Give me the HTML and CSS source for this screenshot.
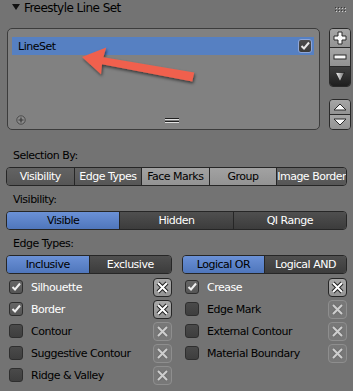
FILE: index.html
```html
<!DOCTYPE html>
<html lang="en">
<head>
  <meta charset="utf-8" />
  <title>Freestyle Line Set</title>
  <link rel="stylesheet" href="styles.css">
</head>
<body>
  <div class="panel-head">
    <span class="tri"></span>
    <span class="title">Freestyle Line Set</span>
    <svg class="grip" width="11" height="5" viewBox="0 0 11 5">
      <g fill="#d0d0d0"><rect x="1" y="1" width="1" height="1"/><rect x="4" y="1" width="1" height="1"/><rect x="7" y="1" width="1" height="1"/><rect x="10" y="1" width="1" height="1"/><rect x="1" y="4" width="1" height="1"/><rect x="4" y="4" width="1" height="1"/><rect x="7" y="4" width="1" height="1"/><rect x="10" y="4" width="1" height="1"/></g>
      <g fill="#3a3a3a"><rect x="0" y="0" width="1" height="1"/><rect x="3" y="0" width="1" height="1"/><rect x="6" y="0" width="1" height="1"/><rect x="9" y="0" width="1" height="1"/><rect x="0" y="3" width="1" height="1"/><rect x="3" y="3" width="1" height="1"/><rect x="6" y="3" width="1" height="1"/><rect x="9" y="3" width="1" height="1"/></g>
    </svg>
  </div>

  <div class="list-area">
    <div class="list">
      <div class="list-item">
        <span>LineSet</span>
        <span class="cb cb-item">
          <svg width="12" height="12" viewBox="0 0 12 12"><polyline points="2.5,6 5,8.5 10,2.5" fill="none" stroke="#e8e8e8" stroke-width="2"/></svg>
        </span>
      </div>
      <div class="list-foot">
        <svg width="10" height="10" viewBox="0 0 10 10">
          <circle cx="5" cy="5" r="4.2" fill="#8a8a8a" stroke="#4a4a4a" stroke-width="1"/>
          <path d="M5 2.5v5M2.5 5h5" stroke="#3a3a3a" stroke-width="1.2"/>
        </svg>
        <svg class="resize" width="14" height="5" viewBox="0 0 14 5">
          <rect x="0" y="0" width="14" height="1" fill="#202020"/>
          <rect x="0" y="1" width="14" height="1" fill="#e0e0e0"/>
          <rect x="0" y="3" width="14" height="1" fill="#202020"/>
          <rect x="0" y="4" width="14" height="1" fill="#e0e0e0"/>
        </svg>
      </div>
    </div>

    <div class="side">
      <div class="sgroup">
        <div class="sbtn">
          <svg width="14" height="14" viewBox="0 0 14 14"><path d="M5 1h4v4h4v4h-4v4h-4v-4h-4v-4h4z" fill="#fafafa" stroke="#2a2a2a" stroke-width="1"/></svg>
        </div>
        <div class="sbtn">
          <svg width="14" height="6" viewBox="0 0 14 6"><rect x="1" y="1" width="12" height="4" fill="#fafafa" stroke="#2a2a2a" stroke-width="1"/></svg>
        </div>
        <div class="sbtn sbtn-dark">
          <svg width="10" height="10" viewBox="0 0 10 10">
            <defs><linearGradient id="dd" x1="0" y1="0" x2="1" y2="0"><stop offset="0" stop-color="#ffffff"/><stop offset="1" stop-color="#6a6a6a"/></linearGradient></defs>
            <path d="M0.5 0.5h9l-4.5 9z" fill="url(#dd)" stroke="#111" stroke-width="0.6"/>
          </svg>
        </div>
      </div>
      <div class="sgroup">
        <div class="sbtn sbtn-small">
          <svg width="14" height="8" viewBox="0 0 14 8"><path d="M1 7h12l-6-6z" fill="#fafafa" stroke="#2a2a2a" stroke-width="1"/></svg>
        </div>
        <div class="sbtn sbtn-small">
          <svg width="14" height="8" viewBox="0 0 14 8"><path d="M1 1h12l-6 6z" fill="#fafafa" stroke="#2a2a2a" stroke-width="1"/></svg>
        </div>
      </div>
    </div>
  </div>

  <div class="label first">Selection By:</div>
  <div class="seg">
    <span class="t-on">Visibility</span>
    <span class="t-on">Edge Types</span>
    <span class="t-off">Face Marks</span>
    <span class="t-off">Group</span>
    <span class="t-on">Image Border</span>
  </div>

  <div class="label">Visibility:</div>
  <div class="seg">
    <span class="r-on">Visible</span>
    <span class="r-off">Hidden</span>
    <span class="r-off">QI Range</span>
  </div>

  <div class="label">Edge Types:</div>
  <div class="seg-pair">
    <div class="seg seg-left">
      <span class="r-on">Inclusive</span>
      <span class="r-off">Exclusive</span>
    </div>
    <div class="seg seg-right">
      <span class="r-on">Logical OR</span>
      <span class="r-off">Logical AND</span>
    </div>
  </div>

  <div class="checks">
    <div class="col col-left">
      <div class="check-row on">
        <span class="cb"><svg width="12" height="12" viewBox="0 0 12 12"><polyline points="2.5,6 5,8.5 10,2.5" fill="none" stroke="#f0f0f0" stroke-width="2"/></svg></span>
        <span class="name">Silhouette</span>
        <span class="xbtn"><svg width="17" height="17" viewBox="0 0 17 17"><path d="M4 4l9 9M13 4l-9 9" stroke="#222" stroke-width="4"/><path d="M4 4l9 9M13 4l-9 9" stroke="#fff" stroke-width="2"/></svg></span>
      </div>
      <div class="check-row on">
        <span class="cb"><svg width="12" height="12" viewBox="0 0 12 12"><polyline points="2.5,6 5,8.5 10,2.5" fill="none" stroke="#f0f0f0" stroke-width="2"/></svg></span>
        <span class="name">Border</span>
        <span class="xbtn"><svg width="17" height="17" viewBox="0 0 17 17"><path d="M4 4l9 9M13 4l-9 9" stroke="#222" stroke-width="4"/><path d="M4 4l9 9M13 4l-9 9" stroke="#fff" stroke-width="2"/></svg></span>
      </div>
      <div class="check-row">
        <span class="cb"></span>
        <span class="name">Contour</span>
        <span class="xbtn off"><svg width="17" height="17" viewBox="0 0 17 17"><path d="M4 4l9 9M13 4l-9 9" stroke="#6e6e6e" stroke-width="4"/><path d="M4 4l9 9M13 4l-9 9" stroke="#e4e4e4" stroke-width="2"/></svg></span>
      </div>
      <div class="check-row">
        <span class="cb"></span>
        <span class="name">Suggestive Contour</span>
        <span class="xbtn off"><svg width="17" height="17" viewBox="0 0 17 17"><path d="M4 4l9 9M13 4l-9 9" stroke="#6e6e6e" stroke-width="4"/><path d="M4 4l9 9M13 4l-9 9" stroke="#e4e4e4" stroke-width="2"/></svg></span>
      </div>
      <div class="check-row">
        <span class="cb"></span>
        <span class="name">Ridge &amp; Valley</span>
        <span class="xbtn off"><svg width="17" height="17" viewBox="0 0 17 17"><path d="M4 4l9 9M13 4l-9 9" stroke="#6e6e6e" stroke-width="4"/><path d="M4 4l9 9M13 4l-9 9" stroke="#e4e4e4" stroke-width="2"/></svg></span>
      </div>
    </div>
    <div class="col col-right">
      <div class="check-row on">
        <span class="cb"><svg width="12" height="12" viewBox="0 0 12 12"><polyline points="2.5,6 5,8.5 10,2.5" fill="none" stroke="#f0f0f0" stroke-width="2"/></svg></span>
        <span class="name">Crease</span>
        <span class="xbtn"><svg width="17" height="17" viewBox="0 0 17 17"><path d="M4 4l9 9M13 4l-9 9" stroke="#222" stroke-width="4"/><path d="M4 4l9 9M13 4l-9 9" stroke="#fff" stroke-width="2"/></svg></span>
      </div>
      <div class="check-row">
        <span class="cb"></span>
        <span class="name">Edge Mark</span>
        <span class="xbtn off"><svg width="17" height="17" viewBox="0 0 17 17"><path d="M4 4l9 9M13 4l-9 9" stroke="#6e6e6e" stroke-width="4"/><path d="M4 4l9 9M13 4l-9 9" stroke="#e4e4e4" stroke-width="2"/></svg></span>
      </div>
      <div class="check-row">
        <span class="cb"></span>
        <span class="name">External Contour</span>
        <span class="xbtn off"><svg width="17" height="17" viewBox="0 0 17 17"><path d="M4 4l9 9M13 4l-9 9" stroke="#6e6e6e" stroke-width="4"/><path d="M4 4l9 9M13 4l-9 9" stroke="#e4e4e4" stroke-width="2"/></svg></span>
      </div>
      <div class="check-row">
        <span class="cb"></span>
        <span class="name">Material Boundary</span>
        <span class="xbtn off"><svg width="17" height="17" viewBox="0 0 17 17"><path d="M4 4l9 9M13 4l-9 9" stroke="#6e6e6e" stroke-width="4"/><path d="M4 4l9 9M13 4l-9 9" stroke="#e4e4e4" stroke-width="2"/></svg></span>
      </div>
    </div>
  </div>

  <!-- annotation arrow drawn over the list -->
  <svg class="arrow" width="353" height="391" viewBox="0 0 353 391">
    <defs>
      <filter id="shadow" x="-20%" y="-50%" width="140%" height="200%">
        <feDropShadow dx="1" dy="2" stdDeviation="1.5" flood-color="#000" flood-opacity="0.55"/>
      </filter>
    </defs>
    <polygon points="82,57 106.2,47.6 103.4,57.3 194.2,72.6 192.3,81.4 102,64.2 101,74.2" fill="#f0614d" filter="url(#shadow)"/>
  </svg>
</body>
</html>
```

FILE: styles.css
```css
html, body { margin: 0; padding: 0; }
body { width: 353px; height: 391px; overflow: hidden; position: relative; background: #737373; font-family: "DejaVu Sans", Verdana, sans-serif; font-size: 11px; letter-spacing: -0.5px; color: #000; }

.panel-head { height: 28px; display: flex; align-items: flex-start; padding-left: 12px; box-sizing: border-box; }
.panel-head .tri { width: 0; height: 0; border-left: 4px solid transparent; border-right: 4px solid transparent; border-top: 6px solid #111; margin-top: 4px; }
.panel-head .title { margin-left: 4px; font-size: 12px; line-height: 17px; letter-spacing: -0.55px; }
.panel-head .grip { margin-left: auto; margin-right: 7px; margin-top: 7px; }

.list-area { display: flex; padding-left: 7px; height: 102px; }
.list { width: 313px; height: 102px; box-sizing: border-box; border: 1px solid #3c3c3c; border-radius: 5px; background: #818181; padding: 8px 5px 4px 4px; display: flex; flex-direction: column; }
.list-item { height: 18px; background: #5680c2; display: flex; align-items: center; justify-content: space-between; padding: 0 2px 0 6px; }
.list-foot { margin-top: auto; height: 10px; display: flex; align-items: center; padding-left: 4px; }
.list-foot .resize { margin-left: 139px; }

.side { margin-left: 9px; width: 22px; display: flex; flex-direction: column; gap: 12px; }
.sgroup { border: 1px solid #2a2a2a; border-radius: 4px; overflow: hidden; display: flex; flex-direction: column; }
.sbtn { height: 18px; display: flex; align-items: center; justify-content: center; background: linear-gradient(#a6a6a6, #939393); }
.sbtn + .sbtn { border-top: 1px solid #2a2a2a; }
.sbtn-dark { height: 19px; background: linear-gradient(#404040, #1e1e1e); }
.sbtn-small { height: 14px; }

.label { height: 25px; padding: 5px 0 0 13px; box-sizing: border-box; line-height: 18px; }
.label.first { margin-top: 12px; }

.seg { display: flex; height: 19px; margin: 0 6px; box-sizing: border-box; border: 1px solid #262626; border-radius: 4px; overflow: hidden; }
.seg > span { flex: 1; display: flex; align-items: center; justify-content: center; white-space: nowrap; border-left: 1px solid #262626; }
.seg > span:first-child { border-left: none; }
.t-on { background: linear-gradient(#636363, #565656); color: #fff; }
.t-off { background: linear-gradient(#a2a2a2, #939393); color: #000; }
.r-on { background: linear-gradient(#6b91d6, #4f76bc); color: #000; }
.r-off { background: linear-gradient(#4f4f4f, #3c3c3c); color: #fff; }

.seg-pair { display: flex; gap: 10px; margin: 0 6px; }
.seg-pair .seg { margin: 0; }
.seg-left { width: 166px; }
.seg-right { flex: 1; }

.checks { display: flex; gap: 10px; margin: 2px 6px 0; }
.col-left { width: 166px; }
.col-right { flex: 1; }
.check-row { height: 22px; display: flex; align-items: center; padding-left: 3px; }
.check-row .name { margin-left: 8px; }
.check-row.on .name { color: #fff; }
.check-row .xbtn { margin-left: auto; }

.cb { width: 14px; height: 14px; box-sizing: border-box; border: 1px solid #2e2e2e; border-radius: 3px; background: linear-gradient(#4a4a4a, #3e3e3e); display: flex; align-items: center; justify-content: center; }
.check-row.on .cb { background: linear-gradient(#666, #555); }
.cb-item { border-color: #8fa6d8; background: linear-gradient(#4c4c4c, #3a3a3a); }

.xbtn { width: 19px; height: 19px; box-sizing: border-box; border: 1px solid #262626; border-radius: 4px; background: linear-gradient(#a8a8a8, #949494); display: flex; align-items: center; justify-content: center; }
.xbtn.off { border-color: #8e8e8e; background: #787878; }
.xbtn.off svg { opacity: 0.8; }

.arrow { position: absolute; left: 0; top: 0; pointer-events: none; }
```
